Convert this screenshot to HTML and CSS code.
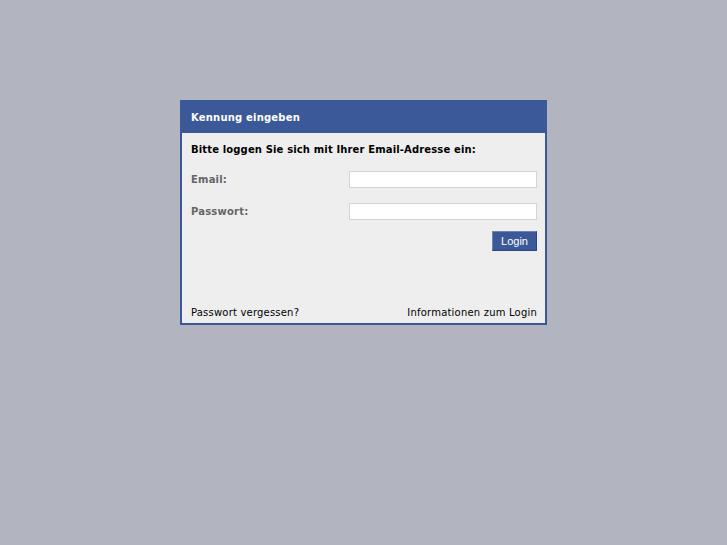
FILE: index.html
```html
<!DOCTYPE html>
<html lang="de">
<head>
    <meta charset="UTF-8">
    <title>Kennung eingeben</title>
    <link rel="stylesheet" href="styles.css">
</head>
<body>
    <div class="login-box">
        <div class="login-head">Kennung eingeben</div>
        <form class="login-body">
            <p class="intro">Bitte loggen Sie sich mit Ihrer Email-Adresse ein:</p>
            <div class="fields">
                <div class="row">
                    <label for="email">Email:</label>
                    <input type="text" id="email">
                </div>
                <div class="row">
                    <label for="pass">Passwort:</label>
                    <input type="password" id="pass">
                </div>
            </div>
            <div class="actions">
                <button type="submit">Login</button>
            </div>
            <div class="links">
                <a href="#">Passwort vergessen?</a>
                <a href="#">Informationen zum Login</a>
            </div>
        </form>
    </div>
</body>
</html>
```

FILE: styles.css
```css
/* General */
body {
    margin: 0;
    background: #b2b4c0;
    font-family: 'DejaVu Sans', Verdana, sans-serif;
    font-size: 10px;
    color: #000;
}

.login-box {
    width: 363px;
    height: 221px;
    margin: 100px 0 0 180px;
    border: 2px solid #3b5998;
    background: #eeeeee;
    display: flex;
    flex-direction: column;
}

.login-head {
    background: #3b5998;
    color: #fff;
    font-weight: bold;
    letter-spacing: 0.2px;
    height: 31px;
    line-height: 31px;
    padding-left: 9px;
}

/* Form */
.login-body {
    flex: 1;
    display: flex;
    flex-direction: column;
    padding: 10px 8px 0 9px;
}

.intro {
    margin: 0 0 14px;
    font-weight: bold;
    letter-spacing: 0.14px;
    line-height: 14px;
}

.fields {
    display: flex;
    flex-direction: column;
    gap: 15px;
    margin-bottom: 11px;
}

.row {
    display: flex;
    align-items: center;
    justify-content: space-between;
    height: 17px;
}

.row label {
    color: #666;
    font-weight: bold;
    letter-spacing: 0.2px;
}

.row input {
    width: 186px;
    height: 15px;
    padding: 0;
    margin: 0;
    border: 1px solid #d4d4d4;
    background: #fff;
}

.actions {
    display: flex;
    justify-content: flex-end;
}

button {
    width: 45px;
    height: 20px;
    padding: 0 0 1px;
    background: #3b5998;
    color: #fff;
    font-family: 'Liberation Sans', Arial, sans-serif;
    font-size: 11px;
    border: 1px solid;
    border-color: #6d84b4 #29447e #29447e #6d84b4;
    cursor: pointer;
}

.links {
    margin-top: auto;
    display: flex;
    justify-content: space-between;
    padding-bottom: 3px;
    line-height: 14px;
    letter-spacing: 0.2px;
}

.links a {
    color: #000;
    text-decoration: none;
}
```
